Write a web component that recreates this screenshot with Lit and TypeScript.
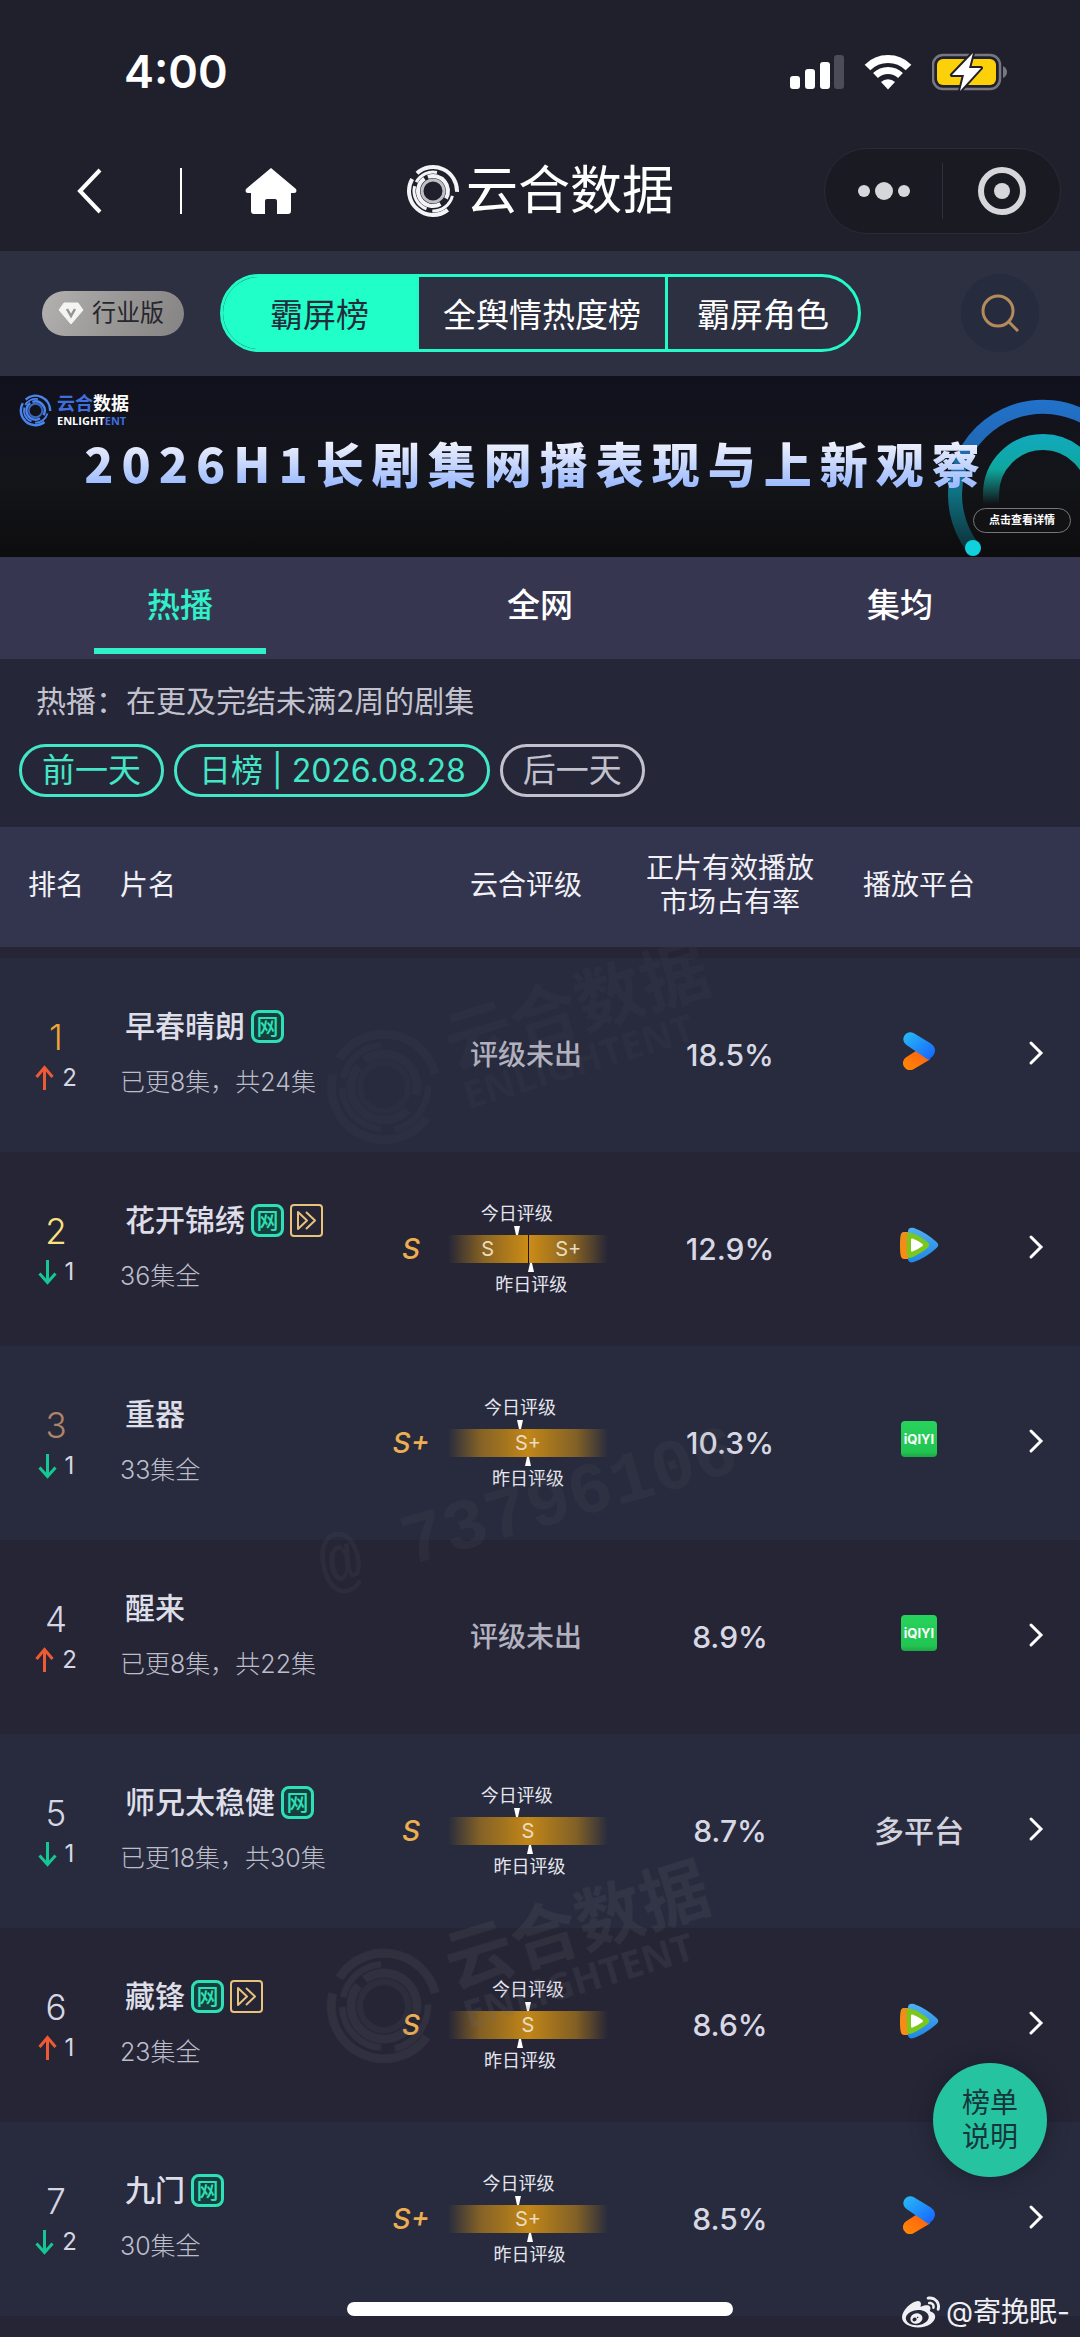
import { LitElement, html, svg, css, nothing } from "lit";
import { customElement, property, state } from "lit/decorators.js";
import { classMap } from "lit/directives/class-map.js";

type Platform = "youku" | "tencent" | "iqiyi" | "multi";

interface Rating {
  grade: string;
  bands: string[];
  today: number;
  yesterday: number;
}

interface Show {
  rank: number;
  move: number;
  name: string;
  web: boolean;
  fast: boolean;
  episodes: string;
  rating?: Rating;
  share: string;
  platform: Platform;
}

const SHOWS: Show[] = [
  { rank: 1, move: 2, name: "早春晴朗", web: true, fast: false, episodes: "已更8集，共24集", share: "18.5%", platform: "youku" },
  { rank: 2, move: -1, name: "花开锦绣", web: true, fast: true, episodes: "36集全", rating: { grade: "S", bands: ["S", "S+"], today: 43, yesterday: 52 }, share: "12.9%", platform: "tencent" },
  { rank: 3, move: -1, name: "重器", web: false, fast: false, episodes: "33集全", rating: { grade: "S+", bands: ["S+"], today: 45, yesterday: 50 }, share: "10.3%", platform: "iqiyi" },
  { rank: 4, move: 2, name: "醒来", web: false, fast: false, episodes: "已更8集，共22集", share: "8.9%", platform: "iqiyi" },
  { rank: 5, move: -1, name: "师兄太稳健", web: true, fast: false, episodes: "已更18集，共30集", rating: { grade: "S", bands: ["S"], today: 43, yesterday: 51 }, share: "8.7%", platform: "multi" },
  { rank: 6, move: 1, name: "藏锋", web: true, fast: true, episodes: "23集全", rating: { grade: "S", bands: ["S"], today: 50, yesterday: 45 }, share: "8.6%", platform: "tencent" },
  { rank: 7, move: -2, name: "九门", web: true, fast: false, episodes: "30集全", rating: { grade: "S+", bands: ["S+"], today: 44, yesterday: 51 }, share: "8.5%", platform: "youku" },
];

/** Circular arc around (27, 27); angles run clockwise from twelve o'clock. */
const arc = (r: number, from: number, to: number) => {
  const point = (deg: number) => {
    const a = (deg * Math.PI) / 180;
    return `${(27 + r * Math.sin(a)).toFixed(2)} ${(27 - r * Math.cos(a)).toFixed(2)}`;
  };
  return `M${point(from)}A${r} ${r} 0 ${to - from > 180 ? 1 : 0} 1 ${point(to)}`;
};

const rings = svg`
  <g fill="none" stroke="currentColor">
    <path stroke-width="4" d=${arc(24, -42, 92) + arc(24, 142, 300)} />
    <path stroke-width="3" d=${arc(19, -62, 12) + arc(20, 104, 182) + arc(19, 200, 285)} />
    <path stroke-width="4" d=${arc(15, -20, 120) + arc(15, 150, 325)} />
    <circle cx="27" cy="27" r="11" stroke-width="3" opacity="0.75" />
  </g>`;

@customElement("rating-meter")
export class RatingMeter extends LitElement {
  @property({ attribute: false }) rating!: Rating;

  static styles = css`
    :host { display: flex; align-items: center; gap: 4px; }
    .grade { width: 66px; text-align: center; font-size: 28px; line-height: 32px; font-weight: 500; font-style: italic; color: #edae52; }
    .meter { width: 160px; }
    .mark { width: fit-content; display: flex; flex-direction: column; align-items: center; gap: 1px; transform: translateX(-50%); font-size: 18px; line-height: 23px; color: #e6e6ee; white-space: nowrap; }
    .arrow { display: block; width: 6px; height: 9px; fill: #fff; }
    .bar { display: flex; height: 28px; }
    .band { flex: 1; display: flex; align-items: center; justify-content: center; font-size: 20px; line-height: 24px; color: #e9dcc0; background: linear-gradient(90deg, rgba(192,134,24,0), rgba(192,134,24,.6) 20%, #c28618 50%, rgba(192,134,24,.6) 80%, rgba(192,134,24,0)); }
    .bar.split .band:first-child { background: linear-gradient(90deg, rgba(192,134,24,0), rgba(192,134,24,.65) 45%, #cc8c16); border-right: 1px solid #15151c; }
    .bar.split .band:last-child { background: linear-gradient(90deg, #cc8c16, rgba(192,134,24,.65) 55%, rgba(192,134,24,0)); }
  `;

  render() {
    const { grade, bands, today, yesterday } = this.rating;
    return html`
      <span class="grade">${grade}</span>
      <div class="meter">
        <div class="mark" style="margin-left:${today}%">
          <span>今日评级</span>
          <svg class="arrow" viewBox="0 0 6 9"><path d="M0 0h6L4 9H2z" /></svg>
        </div>
        <div class="bar ${bands.length > 1 ? "split" : ""}">
          ${bands.map((b) => html`<span class="band">${b}</span>`)}
        </div>
        <div class="mark" style="margin-left:${yesterday}%">
          <svg class="arrow" viewBox="0 0 6 9"><path d="M2 0h2l2 9H0z" /></svg>
          <span>昨日评级</span>
        </div>
      </div>`;
  }
}

@customElement("platform-logo")
export class PlatformLogo extends LitElement {
  @property() name: Platform = "multi";

  static styles = css`
    :host { display: flex; justify-content: center; }
    .icon { display: block; margin-bottom: 8px; }
    .iqiyi { width: 36px; height: 36px; margin-bottom: 8px; border-radius: 4px; background: linear-gradient(#27d35c, #22c552 85%, #1da646); color: #fff; font-size: 13px; font-weight: 700; line-height: 36px; text-align: center; }
    .text { font-size: 30px; font-weight: 500; line-height: 40px; color: #d3d3de; }
  `;

  render() {
    switch (this.name) {
      case "youku":
        return html`<svg class="icon" width="32" height="38" viewBox="0 0 32 38" role="img" aria-label="优酷">
          <defs>
            <linearGradient id="b" x1="0" y1="0" x2="1" y2="1"><stop stop-color="#28bdf5" /><stop offset="1" stop-color="#1660ff" /></linearGradient>
            <linearGradient id="o" x1="1" y1="0" x2="0" y2="1"><stop stop-color="#ff5a12" /><stop offset="1" stop-color="#ff8a05" /></linearGradient>
          </defs>
          <path fill="url(#o)" d="M16 17 3.500 25A7 7 0 0 0 10.500 37.200L27 27.500Z" />
          <path fill="url(#b)" d="M10.500 1A7 7 0 0 0 3.500 13.100L25.500 28C28 26 32 23 32 18.500C32 15.500 30 12.800 27.500 11.200Z" />
        </svg>`;
      case "tencent":
        return html`<svg class="icon" width="40" height="36" viewBox="0 0 40 36" role="img" aria-label="腾讯视频">
          <defs>
            <linearGradient id="t" x1="0" y1="0" x2="0" y2="1"><stop stop-color="#4fb0f0" /><stop offset="1" stop-color="#1f86e6" /></linearGradient>
            <linearGradient id="a" x1="0" y1="0" x2="0" y2="1"><stop stop-color="#e8901c" /><stop offset="1" stop-color="#ff8a12" /></linearGradient>
          </defs>
          <path fill="url(#a)" d="M5 5C2 5 1 7 1 18s1 14 4 14h7V5Z" />
          <path fill="url(#t)" d="M9 4C9 1 12 0 15 1C23 4 31 9 37 14.500C40 17 40 19 37 21.500C31 27 23 32 15 35C12 36 9 35 9 32Z" />
          <path fill="#7bc71c" d="M8 8C8 5 10 5 13 6C19 8 25 12 29.500 16Q31 18 29.500 20C25 24 19 28 13 30.500C10 31.500 8 31 8 28Z" />
          <path fill="#fff" d="M12 12.500Q12 11 13.500 11.500Q19 13.500 23.500 17Q24.500 18 23.500 19Q19 22.500 13.500 24.500Q12 25 12 23.500Z" />
        </svg>`;
      case "iqiyi":
        return html`<span class="iqiyi">iQIYI</span>`;
      default:
        return html`<span class="text">多平台</span>`;
    }
  }
}

@customElement("app-root")
export class AppRoot extends LitElement {
  @state() private board = 0;
  @state() private tab = 0;

  static styles = css`
    :host { display: block; position: relative; min-height: 100vh; overflow: hidden; background: #252536; color: #e8e8f0; font-family: Inter, "Noto Sans CJK SC", sans-serif; }
    button { font: inherit; color: inherit; background: none; border: 0; padding: 0; margin: 0; cursor: pointer; }
    svg { display: block; }

    .top { background: #20202c; }
    .status { display: flex; align-items: center; justify-content: space-between; padding: 44px 72px 32px 124px; }
    .time { font-size: 45px; font-weight: 600; line-height: 56px; color: #fff; }
    .signals { display: flex; align-items: center; gap: 20px; }
    .nav { display: grid; grid-template-columns: 1fr auto 1fr; align-items: center; padding: 16px 19px 17px 77px; }
    .nav-left { display: flex; align-items: center; }
    .nav-rule { width: 2px; height: 46px; margin: 0 63px 0 78px; background: #fff; }
    .brand { display: flex; align-items: center; gap: 6px; margin-right: 58px; color: #f4f4f8; }
    .brand-name { margin: 0; font-size: 52px; font-weight: 400; line-height: 64px; color: #fff; }
    .capsule { justify-self: end; display: flex; align-items: center; border: 1px solid #2b2b36; border-radius: 44px; background: #1a1a23; }
    .capsule button { display: grid; place-items: center; width: 117px; height: 84px; }
    .capsule-rule { width: 1px; height: 56px; background: #30303b; }

    .boards { display: flex; align-items: center; padding: 23px 41px 24px 42px; background: #2c3041; }
    .edition { display: flex; align-items: center; gap: 8px; height: 45px; padding: 0 20px 0 16px; border-radius: 23px; background: linear-gradient(115deg, #b4b2b0, #9a9896 50%, #858383); color: #26262e; font-size: 24px; line-height: 32px; }
    .segments { display: flex; height: 78px; box-sizing: border-box; margin-left: 36px; border: 3px solid #22fac8; border-radius: 39px; overflow: hidden; font-size: 33px; }
    .segments button { padding: 0 24px; color: #fff; }
    .segments button:first-child { padding: 0 47px; }
    .segments button:last-child { padding: 0 29px; }
    .segments button + button { border-left: 3px solid #22fac8; }
    .segments button.on { background: #20ffc8; color: #242c3c; }
    .search { display: grid; place-items: center; width: 78px; height: 78px; margin-left: auto; border-radius: 50%; background: #272b3e; }

    .banner { position: relative; display: block; height: 181px; box-sizing: border-box; padding: 18px 9px 0 19px; background: linear-gradient(#10111d, #14151a 55%, #0d0d0e); color: #fff; text-decoration: none; overflow: hidden; }
    .art { position: absolute; top: 0; right: 0; }
    .banner-logo { position: relative; display: flex; align-items: center; gap: 5px; font-weight: 700; }
    .banner-logo svg { color: #4a84ee; }
    .banner-cn { display: block; font-size: 18px; line-height: 20px; }
    .banner-en { display: block; font-family: "Open Sans", sans-serif; font-size: 11px; line-height: 13px; }
    .blue { color: #3f6fdc; }
    .headline { position: relative; width: fit-content; margin: 2px auto 0; padding-right: 18px; font-family: "Noto Sans CJK SC", sans-serif; font-size: 48px; font-weight: 900; letter-spacing: 8px; line-height: 66px; white-space: nowrap; background: linear-gradient(#f0f2fb 20%, #9dbbff 85%); -webkit-background-clip: text; background-clip: text; color: transparent; }
    .more { position: relative; display: block; width: fit-content; margin: 13px 0 0 auto; padding: 0 15px; border: 1px solid #77777a; border-radius: 13px; background: #121214; font-size: 11px; font-weight: 700; line-height: 23px; }

    .tabs { display: grid; grid-template-columns: repeat(3, 1fr); background: #373650; }
    .tabs button { display: flex; flex-direction: column; align-items: center; gap: 19px; padding: 24px 0 5px; font-size: 33px; font-weight: 500; line-height: 48px; color: #fff; }
    .tabs button::after { content: ""; width: 172px; height: 6px; }
    .tabs button.on { color: #31f0c8; }
    .tabs button.on::after { background: #31f0c8; }

    .filter { padding: 20px 19px 30px; background: #252637; }
    .note { margin: 0 0 21px; padding-left: 17px; font-size: 30px; line-height: 44px; color: #c2c2ce; }
    .days { display: flex; gap: 10px; font-size: 33px; line-height: 47px; }
    .days button { padding: 0 20px; border: 3px solid #43e6c6; border-radius: 27px; color: #43e6c6; }
    .days button.date { padding: 0 21px 0 22px; font-size: 32px; }
    .days button.off { border-color: #c2c2ce; color: #c2c2ce; }

    .chart { width: 100%; border-collapse: collapse; table-layout: fixed; }
    .c-rank { width: 112px; }
    .c-rate { width: 236px; }
    .c-share { width: 232px; }
    .c-plat { width: 146px; }
    .c-go { width: 88px; }
    .chart th { box-sizing: border-box; height: 120px; padding: 0 0 4px; background: #33354e; font-size: 28px; font-weight: 400; line-height: 34px; color: #f0f0f6; }
    .chart th.name { padding-left: 8px; text-align: left; }
    .chart th.rate { padding-left: 60px; }
    .chart tbody::before { content: ""; display: block; height: 11px; }
    .chart td { box-sizing: border-box; height: 194px; padding: 0; text-align: center; vertical-align: middle; }
    .chart tbody tr:nth-child(odd) { background: #272b3d; }
    .chart tbody tr:nth-child(even) { background: #252536; }
    .place { font-size: 35px; font-weight: 300; line-height: 46px; color: #d6d6e2; }
    .place.p1 { color: #efa437; }
    .place.p2 { color: #fbe07e; }
    .place.p3 { color: #b08468; }
    .move { display: flex; align-items: center; justify-content: center; gap: 8px; font-size: 24px; line-height: 36px; color: #d6d6e2; }
    .chart td.name { padding: 0 0 4px 8px; text-align: left; }
    .title { display: flex; align-items: center; gap: 6px; margin-bottom: 18px; padding-left: 5px; font-size: 30px; font-weight: 500; line-height: 40px; color: #dedee8; white-space: nowrap; }
    .web, .fast { box-sizing: border-box; width: 33px; height: 33px; }
    .web { border: 3px solid #2fe0b6; border-radius: 8px; background: #16403f; color: #2fe0b6; font-size: 22px; line-height: 26px; text-align: center; }
    .eps { display: block; font-size: 25px; line-height: 36px; font-weight: 300; color: #bdbdca; white-space: nowrap; }
    .unrated { padding-left: 60px; font-size: 28px; font-weight: 500; line-height: 36px; color: #b3b3c0; }
    .share { font-size: 30px; font-weight: 500; color: #d8d8e4; }
    .go { width: 44px; height: 44px; }
    .go svg { margin: auto; }

    .marks { position: absolute; left: 0; top: 947px; width: 1080px; height: 1390px; color: #6b6b70; fill: #6b6b70; pointer-events: none; }
    .wm-cn { font: 700 68px "Noto Sans CJK SC", sans-serif; }
    .wm-en { font: 700 38px "Open Sans", sans-serif; }
    .wm-id { font: 700 72px "Liberation Mono", monospace; white-space: pre; }
    .help { position: absolute; right: 33px; bottom: 161px; width: 114px; height: 114px; border-radius: 50%; background: #25c3a0; box-shadow: 0 0 20px rgba(20,20,32,.5); color: #16363c; font-size: 28px; line-height: 34px; }
    .foot { height: 22px; }
    .indicator { position: absolute; left: 50%; bottom: 22px; width: 386px; height: 14px; border-radius: 7px; background: #fff; transform: translateX(-50%); }
    .credit { position: absolute; right: 10px; bottom: 8px; display: flex; align-items: center; gap: 6px; color: #f0f0f3; font-size: 28px; line-height: 36px; }
  `;

  private renderMove(move: number) {
    return html`<div class="move">
      ${move > 0
        ? html`<svg width="19" height="26" viewBox="0 0 19 26" fill="none" stroke="#ee5a34" stroke-width="3"><path d="M9.500 25V2M1.500 12l8-9.500 8 9.500" /></svg>`
        : html`<svg width="19" height="26" viewBox="0 0 19 26" fill="none" stroke="#14c795" stroke-width="3"><path d="M9.500 1v23M1.500 14.500l8 9 8-9" /></svg>`}
      <span>${Math.abs(move)}</span>
    </div>`;
  }

  private renderShow(s: Show) {
    return html`<tr>
      <td><div class="place p${s.rank}">${s.rank}</div>${this.renderMove(s.move)}</td>
      <td class="name">
        <div class="title">
          <span>${s.name}</span>
          ${s.web ? html`<span class="web">网</span>` : nothing}
          ${s.fast
            ? html`<svg class="fast" viewBox="0 0 33 33" fill="none" stroke="#e8c27a" stroke-width="2"><rect x="1" y="1" width="31" height="31" rx="3" /><path d="M8 8v17l9-8.500zM16 8l9 8.500-9 8.500" stroke-linejoin="round" /></svg>`
            : nothing}
        </div>
        <span class="eps">${s.episodes}</span>
      </td>
      <td>${s.rating ? html`<rating-meter .rating=${s.rating}></rating-meter>` : html`<div class="unrated">评级未出</div>`}</td>
      <td class="share">${s.share}</td>
      <td><platform-logo name=${s.platform}></platform-logo></td>
      <td>
        <button class="go" aria-label=${s.name}>
          <svg width="16" height="26" viewBox="0 0 16 26" fill="none" stroke="#fff" stroke-width="3" stroke-linecap="round"><path d="m3 3 10 10L3 23" /></svg>
        </button>
      </td>
    </tr>`;
  }

  private renderMark(y: number, opacity: number) {
    return svg`<g transform="translate(384 ${y})" opacity=${opacity}>
      <g transform="rotate(-16) scale(2.2) translate(-27 -27)">${rings}</g>
      <g transform="rotate(-17)">
        <text class="wm-cn" x="72" y="4">云合数据</text>
        <text class="wm-en" x="74" y="46">ENLIGHTENT</text>
      </g>
    </g>`;
  }

  render() {
    const boards = ["霸屏榜", "全舆情热度榜", "霸屏角色"];
    const tabs = ["热播", "全网", "集均"];
    return html`
      <header class="top">
        <div class="status">
          <span class="time">4:00</span>
          <div class="signals">
            <svg width="54" height="36" viewBox="0 0 54 36" fill="#fff">
              <rect y="22" width="10" height="13" rx="3" /><rect x="15" y="15" width="10" height="20" rx="3" />
              <rect x="30" y="8" width="10" height="27" rx="3" /><rect x="44" y="1" width="10" height="34" rx="3" fill="#4c4c58" />
            </svg>
            <svg width="48" height="36" viewBox="0 0 48 36" fill="none" stroke="#fff">
              <path stroke-width="8" d="M3.500 13.500a29 29 0 0 1 41 0" />
              <path stroke-width="7" d="M11.500 21.500a18 18 0 0 1 25 0" />
              <path fill="#fff" stroke="none" d="m24 35.500-7-7.500a10 10 0 0 1 14 0z" />
            </svg>
            <svg width="76" height="40" viewBox="0 0 76 40">
              <rect x="1" y="3" width="67" height="34" rx="10" fill="none" stroke="#777783" stroke-width="2.500" />
              <path d="M71 14q4 2 4 6t-4 6z" fill="#777783" />
              <rect x="5" y="7" width="59" height="26" rx="6" fill="#fdd10a" />
              <path d="M41 1 20 23h12l-4 16 21-23H37z" fill="#fff" stroke="#20202c" stroke-width="4" stroke-linejoin="round" paint-order="stroke" />
            </svg>
          </div>
        </div>
        <nav class="nav">
          <div class="nav-left">
            <button aria-label="返回"><svg width="25" height="46" viewBox="0 0 25 46" fill="none" stroke="#fff" stroke-width="4"><path d="M23 2 3 23l20 21" /></svg></button>
            <span class="nav-rule"></span>
            <button aria-label="首页"><svg width="52" height="46" viewBox="0 0 52 46" fill="#fff"><path d="M26 0 51 21q1.500 4-2 4h-3v18q0 3-3 3H32V33q0-2-2-2h-8q-2 0-2 2v13H9q-3 0-3-3V25H3q-3.500 0-2-4z" /></svg></button>
          </div>
          <div class="brand">
            <svg width="54" height="54" viewBox="0 0 54 54">${rings}</svg>
            <h1 class="brand-name">云合数据</h1>
          </div>
          <div class="capsule">
            <button aria-label="更多"><svg width="52" height="18" viewBox="0 0 52 18" fill="#d7d7db"><circle cx="6" cy="9" r="6" /><circle cx="26" cy="9" r="9" /><circle cx="46" cy="9" r="6" /></svg></button>
            <span class="capsule-rule"></span>
            <button aria-label="关闭"><svg width="48" height="48" viewBox="0 0 48 48"><circle cx="24" cy="24" r="21" fill="none" stroke="#d7d7db" stroke-width="6" /><circle cx="24" cy="24" r="8" fill="#d7d7db" /></svg></button>
          </div>
        </nav>
      </header>

      <section class="boards">
        <button class="edition">
          <svg width="26" height="23" viewBox="0 0 26 23"><path d="M6 1h14l5 7-12 14L1 8z" fill="#f4f4f4" stroke="#f4f4f4" stroke-linejoin="round" /><path d="m9 7 4 7 4-7" fill="none" stroke="#96958f" stroke-width="2.500" /></svg>
          <span>行业版</span>
        </button>
        <div class="segments">
          ${boards.map((b, i) => html`<button class=${classMap({ on: this.board === i })} @click=${() => (this.board = i)}>${b}</button>`)}
        </div>
        <button class="search" aria-label="搜索">
          <svg width="38" height="38" viewBox="0 0 38 38" fill="none" stroke="#b58b5c" stroke-width="3"><circle cx="17" cy="17" r="15" /><path d="m28 28 9 9" /></svg>
        </button>
      </section>

      <a class="banner" href="#report">
        <svg class="art" width="140" height="181" viewBox="0 0 140 181" fill="none">
          <defs>
            <linearGradient id="outer" gradientUnits="userSpaceOnUse" x1="0" y1="20" x2="0" y2="172"><stop stop-color="#2272cc" /><stop offset=".35" stop-color="#2068b4" /><stop offset=".62" stop-color="#0f7486" /><stop offset="1" stop-color="#0d3038" /></linearGradient>
            <linearGradient id="inner" gradientUnits="userSpaceOnUse" x1="0" y1="58" x2="0" y2="128"><stop stop-color="#12a9bf" /><stop offset=".5" stop-color="#0ea79e" /><stop offset="1" stop-color="#0ea79e" stop-opacity="0" /></linearGradient>
          </defs>
          <path stroke="url(#outer)" stroke-width="14" d="M33 172A88 88 0 1 1 191 117" />
          <path stroke="url(#inner)" stroke-width="16" d="M51 128V118A52 52 0 0 1 155 118" />
          <circle cx="33" cy="172" r="8" fill="#0fd2dd" />
        </svg>
        <span class="banner-logo">
          <svg width="33" height="33" viewBox="0 0 54 54">${rings}</svg>
          <span>
            <span class="banner-cn"><span class="blue">云合</span>数据</span>
            <span class="banner-en">ENLIGHT<span class="blue">ENT</span></span>
          </span>
        </span>
        <h2 class="headline">2026H1长剧集网播表现与上新观察</h2>
        <span class="more">点击查看详情</span>
      </a>

      <div class="tabs">
        ${tabs.map((t, i) => html`<button class=${classMap({ on: this.tab === i })} @click=${() => (this.tab = i)}>${t}</button>`)}
      </div>

      <section class="filter">
        <p class="note">热播：在更及完结未满2周的剧集</p>
        <div class="days">
          <button>前一天</button>
          <button class="date">日榜 | 2026.08.28</button>
          <button class="off">后一天</button>
        </div>
      </section>

      <table class="chart">
        <colgroup><col class="c-rank" /><col /><col class="c-rate" /><col class="c-share" /><col class="c-plat" /><col class="c-go" /></colgroup>
        <thead>
          <tr><th>排名</th><th class="name">片名</th><th class="rate">云合评级</th><th>正片有效播放<br />市场占有率</th><th>播放平台</th><th></th></tr>
        </thead>
        <tbody>${SHOWS.map((s) => this.renderShow(s))}</tbody>
      </table>
      <div class="foot"></div>

      <svg class="marks" viewBox="0 0 1080 1390" aria-hidden="true">
        ${this.renderMark(140, 0.08)}
        <text class="wm-id" opacity="0.1" transform="translate(326 642) rotate(-16)">@ 73796106</text>
        ${this.renderMark(1059, 0.17)}
      </svg>

      <button class="help">榜单<br />说明</button>
      <div class="indicator"></div>
      <div class="credit">
        <svg width="38" height="34" viewBox="0 1.500 24 21" fill="currentColor"><path d="M10.098 20.323c-3.977.391-7.414-1.406-7.672-4.020-.259-2.609 2.759-5.047 6.740-5.441 3.979-.394 7.413 1.404 7.671 4.018.259 2.600-2.759 5.049-6.737 5.439zM9.050 17.219c-.384.616-1.208.884-1.829.602-.612-.279-.793-.991-.406-1.593.379-.595 1.176-.861 1.793-.601.622.263.820.972.442 1.592zm1.270-1.627c-.141.237-.449.353-.689.253-.236-.090-.313-.361-.177-.586.138-.227.436-.346.672-.240.239.090.315.360.180.601zm.176-2.719c-1.893-.493-4.033.450-4.857 2.118-.836 1.704-.026 3.591 1.886 4.210 1.983.640 4.318-.341 5.132-2.179.800-1.793-.201-3.642-2.161-4.149zm7.563-1.224c-.346-.105-.570-.180-.405-.615.375-.977.420-1.804 0-2.404-.781-1.112-2.915-1.053-5.364-.030 0 0-.766.331-.571-.271.376-1.217.315-2.224-.270-2.809-1.338-1.337-4.869.045-7.888 3.080C1.309 10.870 0 13.273 0 15.348c0 3.981 5.099 6.395 10.086 6.395 6.536 0 10.888-3.801 10.888-6.820 0-1.822-1.547-2.854-2.915-3.284zm1.908-5.092c-.766-.856-1.908-1.187-2.960-.962-.436.090-.706.511-.616.932.090.420.511.691.932.602.511-.105 1.067.044 1.442.465.376.421.466.977.316 1.473-.136.406.089.856.510.992.405.119.857-.105.992-.512.330-1.021.120-2.178-.646-3.035zm2.418-2.195c-1.576-1.757-3.905-2.419-6.054-1.968-.496.104-.812.587-.706 1.081.104.496.586.813 1.082.707 1.532-.331 3.185.150 4.296 1.383 1.112 1.246 1.429 2.943.947 4.416-.165.480.106 1.007.586 1.157.479.165.991-.104 1.157-.586.675-2.088.241-4.478-1.338-6.235z" /></svg>
        <span>@寄挽眠-</span>
      </div>
    `;
  }
}
